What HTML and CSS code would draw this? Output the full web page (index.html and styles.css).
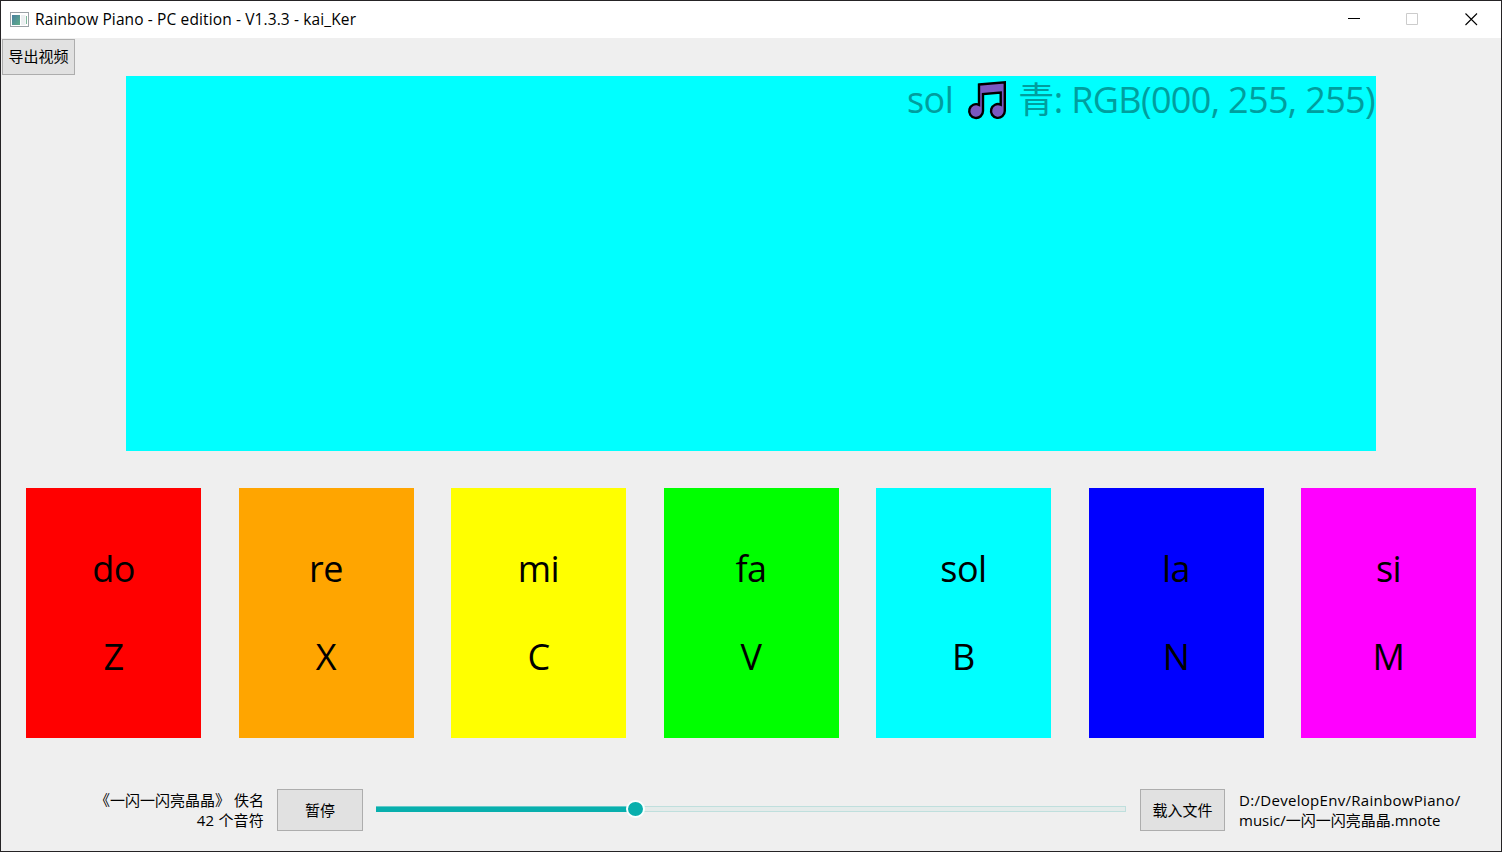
FILE: index.html
```html
<!DOCTYPE html>
<html lang="zh-CN">
<head>
<meta charset="utf-8">
<title>Rainbow Piano</title>
<link rel="stylesheet" href="styles.css">
</head>
<body>
<div class="window">
  <header class="titlebar">
    <svg class="app-icon" width="19" height="15" viewBox="0 0 19 15">
      <defs><linearGradient id="pane" x1="0" y1="0" x2="1" y2="1"><stop offset="0" stop-color="#4a7fa0"/><stop offset="1" stop-color="#5fae88"/></linearGradient></defs>
      <rect x=".5" y=".5" width="18" height="14" fill="#fff" stroke="#9ba1a6"/>
      <rect x="2" y="3" width="8" height="10" fill="url(#pane)"/>
      <rect x="11" y="3" width="4.500" height="10" fill="#eceff1"/>
      <rect x="16" y="4" width="1" height="8" fill="#7eb99b"/>
    </svg>
    <span class="title">Rainbow Piano - PC edition - V1.3.3 - kai_Ker</span>
    <div class="controls">
      <svg width="13" height="13" viewBox="0 0 13 13"><path d="M0 5.500H12" stroke="#000"/></svg>
      <svg width="13" height="13" viewBox="0 0 13 13"><path d="M.5 .5H11.500V11.500H.5Z" fill="none" stroke="#ccc"/></svg>
      <svg width="13" height="13" viewBox="0 0 13 13"><path d="M.5 .5L12 12M12 .5L.5 12" stroke="#000" stroke-width="1.100"/></svg>
    </div>
  </header>
  <button class="button export">导出视频</button>
  <section class="stage">
    <div class="now">
      <span class="now-note">sol</span>
      <svg class="note-icon" width="40" height="40" viewBox="0 0 40 40">
        <path d="M12 4.500L37.800 2.300V31A6.900 6.900 0 1 1 33.700 24.700V12.500L16 14V31A6.900 6.900 0 1 1 12 24.800Z" fill="#7a58c0" stroke="#000" stroke-width="2.400"/>
      </svg>
      <span class="now-color">青: RGB(000, 255, 255)</span>
    </div>
  </section>
  <main class="keys">
    <div class="key red"><span>do</span><span>Z</span></div>
    <div class="key orange"><span>re</span><span>X</span></div>
    <div class="key yellow"><span>mi</span><span>C</span></div>
    <div class="key green"><span>fa</span><span>V</span></div>
    <div class="key cyan"><span>sol</span><span>B</span></div>
    <div class="key blue"><span>la</span><span>N</span></div>
    <div class="key magenta"><span>si</span><span>M</span></div>
  </main>
  <footer class="player">
    <div class="song">《一闪一闪亮晶晶》 佚名<br><span class="count">42 个音符</span></div>
    <button class="button pause">暂停</button>
    <div class="slider"><div class="fill"></div><div class="knob"></div></div>
    <button class="button load">载入文件</button>
    <div class="path"><span class="path-dir">D:/DevelopEnv/RainbowPiano/</span><br>music/一闪一闪亮晶晶.mnote</div>
  </footer>
</div>
</body>
</html>
```
FILE: styles.css
```css
* { box-sizing: border-box; }
body {
  margin: 0;
  font-family: "Open Sans", "Noto Sans CJK SC", sans-serif;
  font-size: 15px;
  color: #000;
}
.window {
  width: 1502px;
  height: 852px;
  border: 1px solid #252325;
  background: #efefef;
  display: flex;
  flex-direction: column;
  overflow: hidden;
}
.titlebar {
  flex: none;
  height: 37px;
  background: #fff;
  display: flex;
  align-items: center;
  padding: 0 23px 0 9px;
}
.app-icon { margin-right: 6px; }
.title {
  white-space: nowrap;
  line-height: 20px;
  padding-bottom: 1px;
  font-size: 15.500px;
  letter-spacing: 0.120px;
}
.controls { margin-left: auto; display: flex; gap: 46px; }
.controls svg { display: block; }
.controls svg:first-child { margin-right: -1px; }
.button {
  flex: none;
  border: 1px solid #adadad;
  background: #e1e1e1;
  font: inherit;
  color: #000;
  padding: 0;
  line-height: 20px;
}
.export { width: 73px; height: 36px; margin: 1px 0 0 1px; padding-bottom: 2px; }
.stage {
  flex: none;
  width: 1250px;
  height: 375px;
  margin: 1px 0 0 125px;
  background: #00ffff;
}
.now {
  display: flex;
  justify-content: flex-end;
  height: 48px;
  line-height: 48px;
  font-size: 36px;
  color: #009e9e;
  white-space: nowrap;
  padding-right: 1px;
}
.now-note { letter-spacing: -0.500px; }
.now-color { letter-spacing: -0.650px; }
.note-icon { margin: 4px 11px 0 14px; }
.keys {
  flex: none;
  display: flex;
  justify-content: space-between;
  margin: 37px 25px 0;
}
.key {
  width: 175px;
  height: 250px;
  display: flex;
  flex-direction: column;
  align-items: center;
  padding-top: 57px;
  gap: 40px;
  font-size: 36px;
  letter-spacing: -0.500px;
  line-height: 48px;
}
.red { background: #ff0000; }
.orange { background: #ffa500; }
.yellow { background: #ffff00; }
.green { background: #00ff00; }
.cyan { background: #00ffff; }
.blue { background: #0000ff; }
.magenta { background: #ff00ff; }
.player {
  display: flex;
  height: 42px;
  margin-top: 51px;
  line-height: 20px;
  white-space: nowrap;
}
.song { width: 263px; text-align: right; padding-top: 1px; }
.count { letter-spacing: 0.200px; }
.pause { width: 86px; margin-left: 13px; }
.slider {
  position: relative;
  width: 750px;
  height: 6px;
  margin: 17px 14px 0 13px;
  border: 1px solid #bfdfdd;
  background: #e4ebea;
}
.fill {
  width: 260px;
  height: 6px;
  margin: -1px;
  border-top: 1px solid #62cbc9;
  background: #08afad;
}
.knob {
  position: absolute;
  left: 249px;
  top: -7px;
  width: 19px;
  height: 18px;
  border: 2px solid #f8ffff;
  border-radius: 50%;
  background: #08afad;
}
.load { width: 85px; }
.path { margin-left: 14px; padding-top: 1px; }
.path-dir { letter-spacing: 0.300px; }
```
